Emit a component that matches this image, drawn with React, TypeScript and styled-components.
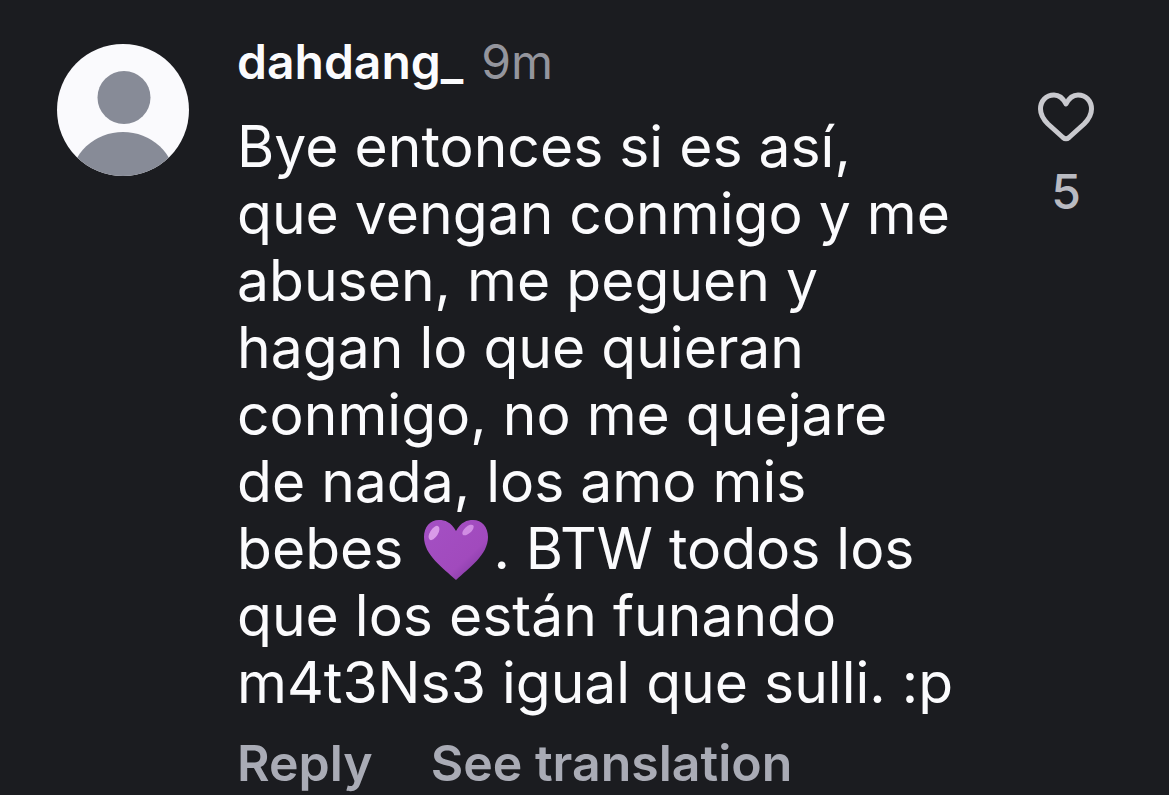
import React from 'react';
import styled, { createGlobalStyle } from 'styled-components';

const GlobalStyle = createGlobalStyle`
  *, *::before, *::after { box-sizing: border-box; }
  html { background: #1b1c20; }
  body {
    margin: 0;
    background: #1b1c20;
    color: #fbfbfd;
    font-family: Inter, "Liberation Sans", sans-serif;
    overflow-x: hidden;
  }
`;

const Comment = styled.article`
  display: flex;
  align-items: flex-start;
  min-height: 100vh;
  padding: 30px 71px 0 57px;
`;

const Avatar = styled.svg`
  flex: none;
  width: 132px;
  height: 132px;
  margin: 14px 48px 0 0;
`;

const Content = styled.div`
  flex: 1;
  min-width: 0;
`;

const Header = styled.header`
  display: flex;
  align-items: baseline;
  gap: 18px;
  height: 64px;
  line-height: 64px;
`;

const Username = styled.a`
  color: #fbfbfd;
  font-size: 48px;
  font-weight: 600;
  text-decoration: none;
`;

const Time = styled.time`
  color: #94959d;
  font-size: 48px;
`;

const Message = styled.p`
  margin: 19px 0 0;
  font-size: 57px;
  line-height: 67px;
  white-space: nowrap;
`;

const Line = styled.span`
  display: block;
`;

const PurpleHeart = styled.svg`
  width: 66px;
  height: 62px;
  margin: 0 4px;
  vertical-align: -12px;
`;

const Actions = styled.footer`
  display: flex;
  gap: 58px;
  margin-top: 15px;
`;

const Action = styled.button`
  padding: 0;
  border: 0;
  background: none;
  color: #a9abb5;
  font: 600 50px/64px Inter, "Liberation Sans", sans-serif;
  white-space: nowrap;
  cursor: pointer;
`;

const Like = styled.button`
  display: flex;
  flex: none;
  flex-direction: column;
  align-items: center;
  gap: 22px;
  width: 64px;
  margin-top: 62px;
  padding: 0;
  border: 0;
  background: none;
  color: #b9bac1;
  font: 500 48px/56px Inter, "Liberation Sans", sans-serif;
  cursor: pointer;
`;

const LikeIcon = styled.svg`
  width: 56px;
  height: 50px;
`;

export default function App() {
  return (
    <>
      <GlobalStyle />
      <Comment>
        <Avatar viewBox="0 0 132 132" role="img" aria-label="Profile picture">
          <defs>
            <clipPath id="avatar-circle">
              <circle cx="66" cy="66" r="66" />
            </clipPath>
          </defs>
          <g clipPath="url(#avatar-circle)">
            <rect width="132" height="132" fill="#fafafd" />
            <circle cx="67" cy="53.5" r="26.5" fill="#878b97" />
            <ellipse cx="66" cy="137" rx="52" ry="49" fill="#878b97" />
          </g>
        </Avatar>
        <Content>
          <Header>
            <Username href="#">dahdang_</Username>
            <Time>9m</Time>
          </Header>
          <Message>
            <Line>Bye entonces si es así,</Line>
            <Line>que vengan conmigo y me</Line>
            <Line>abusen, me peguen y</Line>
            <Line>hagan lo que quieran</Line>
            <Line>conmigo, no me quejare</Line>
            <Line>de nada, los amo mis</Line>
            <Line>
              bebes{' '}
              <PurpleHeart viewBox="0 0 66 62" role="img" aria-label="purple heart">
                <defs>
                  <linearGradient id="heart-fill" x1="0" y1="0" x2="1" y2="1">
                    <stop offset="0" stopColor="#a450c4" />
                    <stop offset="0.65" stopColor="#a14abd" />
                    <stop offset="1" stopColor="#713095" />
                  </linearGradient>
                </defs>
                <path
                  d="M33 12C28 3 22 1 16 1C7 1 1 8 1 18C1 36 20 49 33 61C46 49 65 36 65 18C65 8 59 1 50 1C44 1 38 3 33 12Z"
                  fill="url(#heart-fill)"
                />
                <ellipse cx="11" cy="14" rx="4" ry="8" transform="rotate(32 11 14)" fill="#d99be9" />
                <ellipse cx="45" cy="11" rx="3.5" ry="7" transform="rotate(48 45 11)" fill="#d08ce3" />
              </PurpleHeart>
              . BTW todos los
            </Line>
            <Line>que los están funando</Line>
            <Line>m4t3Ns3 igual que sulli. :p</Line>
          </Message>
          <Actions>
            <Action type="button">Reply</Action>
            <Action type="button">See translation</Action>
          </Actions>
        </Content>
        <Like type="button" aria-label="Like, 5 likes">
          <LikeIcon viewBox="0 0 56 50" aria-hidden="true">
            <path
              d="M28 12C25 6 21 3 16 3C8 3 2.5 9 2.5 17C2.5 23 5 27 10 32L25 45.500Q28 48 31 45.500L46 32C51 27 53.500 23 53.500 17C53.500 9 48 3 40 3C35 3 31 6 28 12Z"
              fill="none"
              stroke="#c9c9ce"
              strokeWidth="5"
              strokeLinejoin="round"
            />
          </LikeIcon>
          5
        </Like>
      </Comment>
    </>
  );
}
